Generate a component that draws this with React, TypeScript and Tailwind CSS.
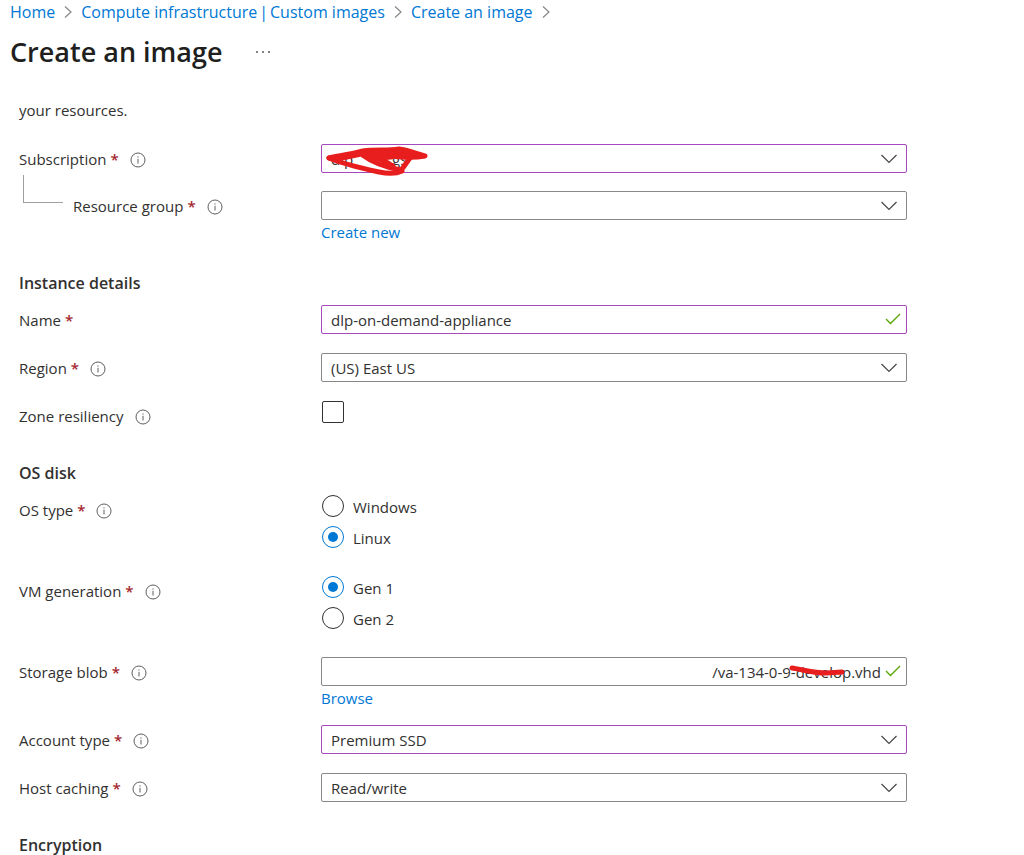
import { ReactNode, useState } from "react";

const selectOptions = {
  subscription: ["dlp\u00a0\u00a0\u00a0\u00a0\u00a0\u00a0\u00a0\u00a0\u00a0\u00a0gs"],
  resourceGroup: [""],
  region: ["(US) East US"],
  accountType: ["Premium SSD"],
  hostCaching: ["Read/write"],
};

function InfoIcon() {
  return (
    <svg className="ml-[11px] size-4 shrink-0" viewBox="0 0 16 16" fill="none" stroke="#605e5c">
      <circle cx="8" cy="8" r="7" />
      <path d="M8 6.8v4.7M8 4.4v1.2" />
    </svg>
  );
}

function CrumbChevron() {
  return (
    <svg className="mx-2 h-3.5 w-2.5 shrink-0" viewBox="0 0 10 14" fill="none" stroke="#8a8886" strokeWidth="1.2">
      <path d="M2 1.5L8 7l-6 5.5" />
    </svg>
  );
}

function CheckMark() {
  return (
    <svg className="pointer-events-none absolute top-2 right-1.5 h-3 w-4" viewBox="0 0 16 12" fill="none" stroke="#57a300" strokeWidth="1.3">
      <path d="M1 6l4.5 4.5L15 1" />
    </svg>
  );
}

type RowProps = {
  label: string;
  htmlFor?: string;
  required?: boolean;
  info?: boolean;
  nested?: boolean;
  children: ReactNode;
};

function Row({ label, htmlFor, required, info, nested, children }: RowProps) {
  return (
    <div className="grid grid-cols-[302px_1fr] items-start">
      <div className="relative flex h-[29px] items-center pt-0.5">
        {nested && (
          <span className="absolute -top-4 left-1 h-7 w-10 border-b border-l border-[#a19f9d]" />
        )}
        <label htmlFor={htmlFor} className={nested ? "pl-[54px]" : ""}>
          {label}
          {required && <span className="ml-1 font-semibold text-[#a4262c]">*</span>}
        </label>
        {info && <InfoIcon />}
      </div>
      <div>{children}</div>
    </div>
  );
}

type SelectProps = {
  id: string;
  options: string[];
  changed?: boolean;
  children?: ReactNode;
};

function Select({ id, options, changed, children }: SelectProps) {
  return (
    <div className="relative">
      <select
        id={id}
        className={
          "block h-[29px] w-full appearance-none rounded-xs border bg-white pt-0.5 pr-10 pl-[9px] outline-none " +
          (changed ? "border-[#a647bd]" : "border-[#8a8886]")
        }
      >
        {options.map((o) => <option key={o}>{o}</option>)}
      </select>
      <svg className="pointer-events-none absolute top-2.5 right-2.5 h-2.5 w-4" viewBox="0 0 16 10" fill="none" stroke="#484644" strokeWidth="1.2">
        <path d="M0.5 1l7.5 7.5L15.5 1" />
      </svg>
      {children}
    </div>
  );
}

type RadioProps = {
  name: string;
  options: string[];
  value: string;
  onChange: (value: string) => void;
};

function RadioGroup({ name, options, value, onChange }: RadioProps) {
  return (
    <div className="flex flex-col gap-[9px] pb-[9px]" role="radiogroup" aria-label={name}>
      {options.map((o) => (
        <label key={o} className="flex h-[22px] items-center gap-[9px] pl-px">
          <input
            type="radio"
            name={name}
            checked={value === o}
            onChange={() => onChange(o)}
            className="grid size-[22px] appearance-none place-items-center rounded-full border border-[#323130] before:size-2.5 before:rounded-full checked:border-[#0078d4] checked:before:bg-[#0078d4]"
          />
          <span className="pt-0.5">{o}</span>
        </label>
      ))}
    </div>
  );
}

function Section({ title, children }: { title: string; children?: ReactNode }) {
  return (
    <section className="mt-[35px]">
      <h2 className="mb-3.5 text-base leading-4 font-semibold">{title}</h2>
      <div className="flex flex-col gap-[19px]">{children}</div>
    </section>
  );
}

function App() {
  const [name, setName] = useState("dlp-on-demand-appliance");
  const [blob, setBlob] = useState("/va-134-0-9-develop.vhd");
  const [osType, setOsType] = useState("Linux");
  const [generation, setGeneration] = useState("Gen 1");
  const [zone, setZone] = useState(false);

  return (
    <div className="bg-white font-['Open_Sans','Noto_Sans',sans-serif] text-[15px] text-[#323130]">
      <nav className="flex h-6 items-center pl-2.5 text-base text-[#0078d4]">
        <a href="#home">Home</a>
        <CrumbChevron />
        <span className="flex gap-0.5">
          <a href="#infrastructure">Compute infrastructure</a>|
          <a href="#images">Custom images</a>
        </span>
        <CrumbChevron />
        <a href="#create">Create an image</a>
        <CrumbChevron />
      </nav>
      <header className="mt-2 flex h-10 items-center gap-8 pl-2.5">
        <h1 className="text-[27px] leading-10 font-semibold text-[#201f1e]">Create an image</h1>
        <button type="button" aria-label="More">
          <svg className="h-1 w-4" viewBox="0 0 16 4" fill="#484644">
            <circle cx="2" cy="2" r="0.9" />
            <circle cx="8" cy="2" r="0.9" />
            <circle cx="14" cy="2" r="0.9" />
          </svg>
        </button>
      </header>

      <main className="mr-[117px] ml-[19px]">
        <p className="pt-7 leading-5">your resources.</p>

        <div className="mt-6 flex flex-col gap-[18px]">
          <Row label="Subscription" htmlFor="subscription" required info>
            <Select id="subscription" options={selectOptions.subscription} changed>
              {/* marker over the subscription name */}
              <svg
                className="pointer-events-none absolute top-0.5 left-1 h-8 w-[104px]"
                viewBox="0 0 104 32"
                fill="none"
                stroke="#e81e1e"
                strokeWidth="5"
                strokeLinecap="round"
                strokeLinejoin="round"
              >
                <path d="M4 12C16 9 28 8 38 5C50 3 62 5 74 3C84 4 91 8 100 10C84 13 66 10 42 8" />
                <path d="M4 12C18 18 36 22 54 26C64 28 73 27 77 25" />
                <path d="M5 12C14 13 24 11 36 8C44 14 58 21 76 24C80 20 82 15 86 11" />
                <path d="M42 9C54 12 62 16 68 20M48 9C56 12 62 13 70 10M50 6C62 7 74 8 88 8" />
              </svg>
            </Select>
          </Row>
          <Row label="Resource group" htmlFor="resource-group" required info nested>
            <Select id="resource-group" options={selectOptions.resourceGroup} />
            <a href="#new" className="block h-5 leading-6 text-[#0078d4]">Create new</a>
          </Row>
        </div>

        <Section title="Instance details">
          <Row label="Name" htmlFor="name" required>
            <div className="relative">
              <input
                id="name"
                type="text"
                value={name}
                onChange={(e) => setName(e.target.value)}
                className="block h-[29px] w-full rounded-xs border border-[#a647bd] pr-8 pl-[9px] outline-none"
              />
              <CheckMark />
            </div>
          </Row>
          <Row label="Region" htmlFor="region" required info>
            <Select id="region" options={selectOptions.region} />
          </Row>
          <Row label="Zone resiliency" htmlFor="zone" info>
            <input
              id="zone"
              type="checkbox"
              checked={zone}
              onChange={(e) => setZone(e.target.checked)}
              className="ml-px block size-[22px] appearance-none rounded-xs border border-[#323130] checked:bg-[#0078d4]"
            />
          </Row>
        </Section>

        <Section title="OS disk">
          <Row label="OS type" required info>
            <RadioGroup name="OS type" options={["Windows", "Linux"]} value={osType} onChange={setOsType} />
          </Row>
          <Row label="VM generation" required info>
            <RadioGroup name="VM generation" options={["Gen 1", "Gen 2"]} value={generation} onChange={setGeneration} />
          </Row>
          <Row label="Storage blob" htmlFor="blob" required info>
            <div className="relative">
              <input
                id="blob"
                type="text"
                value={blob}
                onChange={(e) => setBlob(e.target.value)}
                className="block h-[29px] w-full rounded-xs border border-[#8a8886] pr-[25px] pl-[9px] text-right outline-none"
              />
              <CheckMark />
              <svg
                className="pointer-events-none absolute top-2 right-[62px] h-3 w-14"
                viewBox="0 0 56 12"
                fill="none"
                stroke="#e81e1e"
                strokeWidth="5"
                strokeLinecap="round"
              >
                <path d="M3 3C16 5 25 8 37 8L53 7" />
              </svg>
            </div>
            <a href="#browse" className="block h-5 leading-6 text-[#0078d4]">Browse</a>
          </Row>
          <Row label="Account type" htmlFor="account-type" required info>
            <Select id="account-type" options={selectOptions.accountType} changed />
          </Row>
          <Row label="Host caching" htmlFor="host-caching" required info>
            <Select id="host-caching" options={selectOptions.hostCaching} />
          </Row>
        </Section>

        <Section title="Encryption" />
      </main>
    </div>
  );
}

export default App;
